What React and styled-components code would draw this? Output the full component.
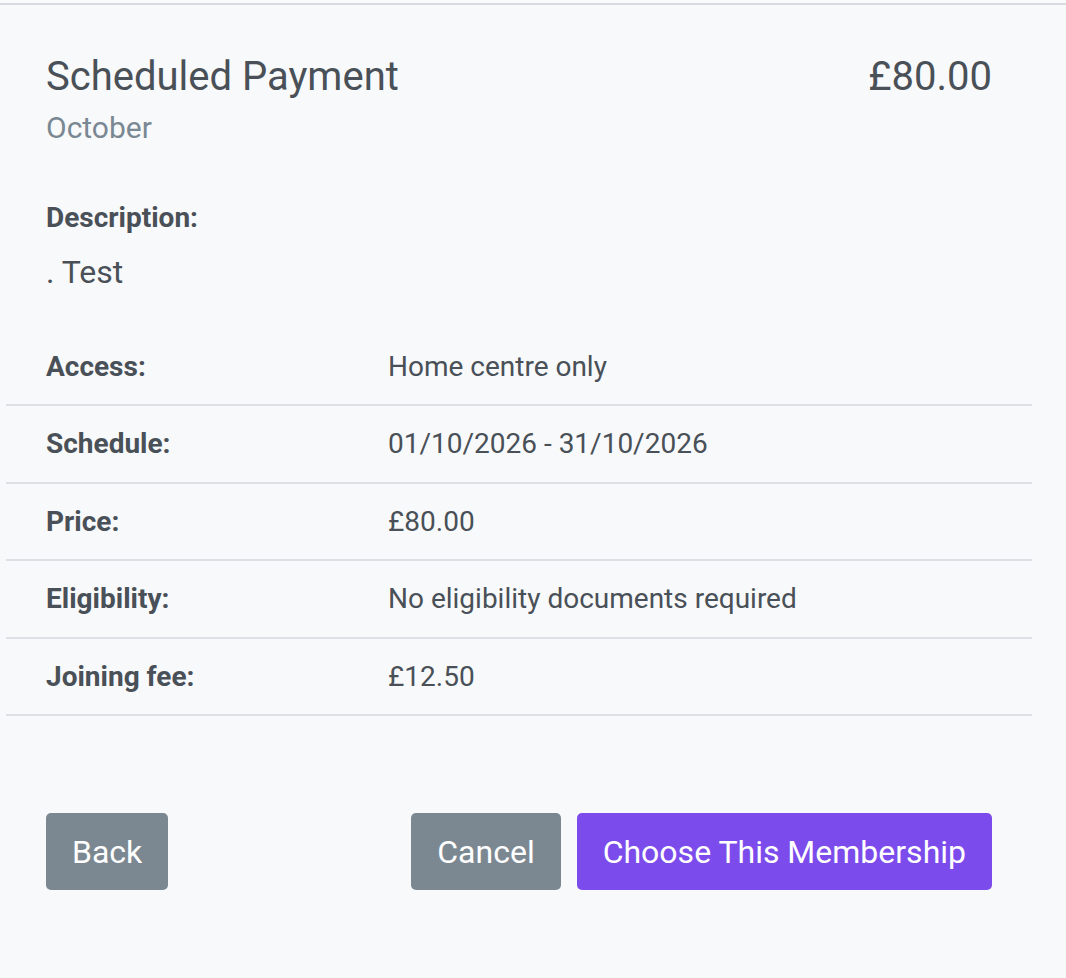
import React from 'react';
import styled, {createGlobalStyle} from 'styled-components';

const GlobalStyle = createGlobalStyle`
  html, body {
    margin: 0;
    padding: 0;
    background: #f8f9fa;
  }
  body {
    font-family: Roboto, 'Liberation Sans', sans-serif;
    color: #495057;
  }
`

const details = [
    {label: 'Access:', value: 'Home centre only'},
    {label: 'Schedule:', value: '01/10/2026 - 31/10/2026'},
    {label: 'Price:', value: '£80.00'},
    {label: 'Eligibility:', value: 'No eligibility documents required'},
    {label: 'Joining fee:', value: '£12.50'},
];

const Page = styled.div`
  min-height: 978px;
  background: #f8f9fa;
  border-top: 3px solid #fbfbfc;
  box-sizing: border-box;
`
const TopRule = styled.div`
  height: 2px;
  background: #d7dbdf;
`
const Card = styled.div`
  width: 1026px;
  margin-left: 6px;
  padding: 48px 40px 0;
  box-sizing: border-box;
`
const Header = styled.div`
  display: flex;
  justify-content: space-between;
  align-items: flex-start;
`
const Title = styled.h2`
  margin: 0;
  font-size: 40px;
  font-weight: 400;
  line-height: 48px;
  color: #495057;
`
const Amount = styled(Title)``;
const Subtitle = styled.div`
  margin-top: 9px;
  font-size: 30px;
  line-height: 36px;
  color: #7a8893;
`
const Label = styled.div`
  font-size: 28px;
  font-weight: 700;
  line-height: 34px;
  color: #495057;
`
const DescriptionLabel = styled(Label)`
  margin-top: 55px;
`
const DescriptionText = styled.div`
  margin-top: 19px;
  font-size: 32px;
  line-height: 36px;
`
const Table = styled.div`
  margin: 38.5px -40px 0;
`
const Row = styled.div`
  display: grid;
  grid-template-columns: 342px 1fr;
  border-bottom: 2px solid #dde1e5;
`
const Cell = styled.div`
  padding: 17px 0 16.5px 40px;
  font-size: 28px;
  line-height: 42px;
  font-weight: ${({head}) => head ? 700 : 400};
`
const Actions = styled.div`
  display: flex;
  align-items: center;
  gap: 16px;
  margin-top: 97px;
`
const Button = styled.button`
  height: 77px;
  padding: 0 26px;
  border: 0;
  border-radius: 5px;
  font-family: Roboto, 'Liberation Sans', sans-serif;
  font-size: 32px;
  line-height: 48px;
  color: #fff;
  background: ${({primary}) => primary ? '#7b4bec' : '#7c8891'};
  cursor: pointer;
`
const Spacer = styled.div`
  flex: 1;
`

export default () => {
    return <>
        <GlobalStyle/>
        <Page>
            <TopRule/>
            <Card>
                <Header>
                    <div>
                        <Title>Scheduled Payment</Title>
                        <Subtitle>October</Subtitle>
                    </div>
                    <Amount>£80.00</Amount>
                </Header>
                <DescriptionLabel>Description:</DescriptionLabel>
                <DescriptionText>. Test</DescriptionText>
                <Table>
                    {details.map(d => (
                        <Row key={d.label}>
                            <Cell head>{d.label}</Cell>
                            <Cell>{d.value}</Cell>
                        </Row>
                    ))}
                </Table>
                <Actions>
                    <Button>Back</Button>
                    <Spacer/>
                    <Button>Cancel</Button>
                    <Button primary>Choose This Membership</Button>
                </Actions>
            </Card>
        </Page>
    </>
}
